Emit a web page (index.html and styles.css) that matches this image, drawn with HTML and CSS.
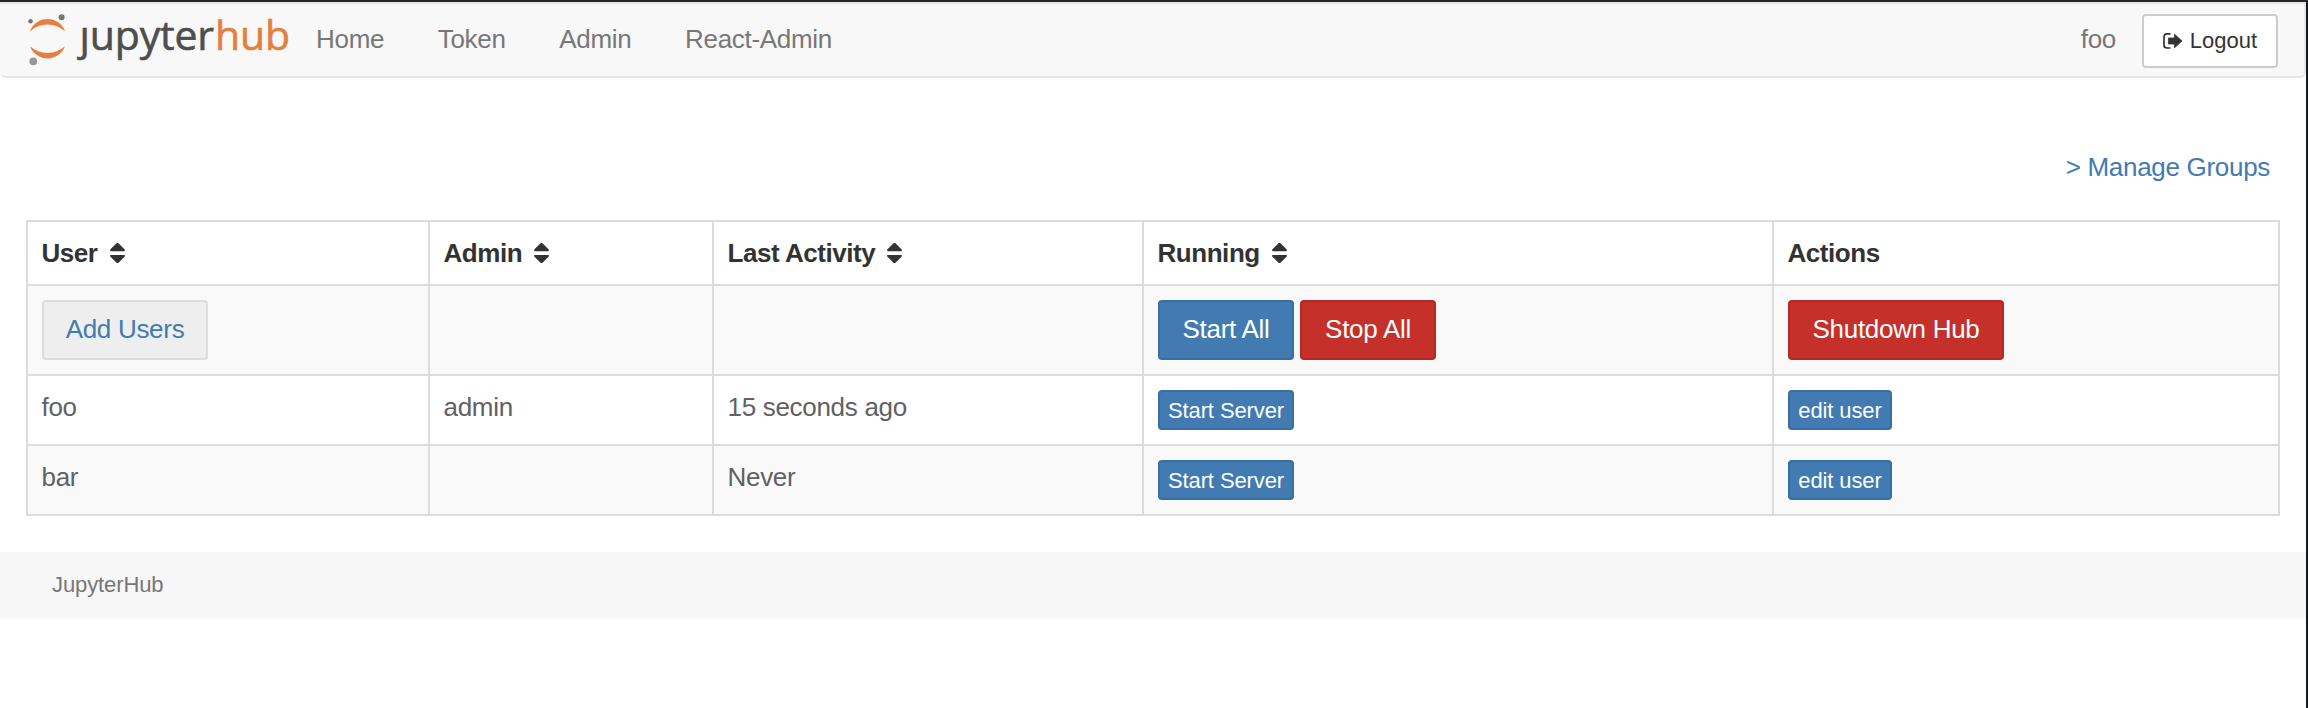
FILE: index.html
```html
<!DOCTYPE html>
<html lang="en">
<head>
<meta charset="utf-8">
<title>JupyterHub</title>
<link rel="stylesheet" href="styles.css">
</head>
<body>
<svg class="defs" width="0" height="0">
  <symbol id="sort" viewBox="0 0 1024 1280">
    <path d="M1024 832q0 26-19 45l-448 448q-19 19-45 19t-45-19L19 877Q0 858 0 832t19-45 45-19h896q26 0 45 19t19 45zM1024 448q0 26-19 45t-45 19H64q-26 0-45-19T0 448t19-45L467-45q19-19 45-19t45 19l448 448q19 19 19 45z"/>
  </symbol>
</svg>
<div class="page">
  <nav class="navbar">
    <a class="brand">
      <svg width="264" height="64" viewBox="0 0 264 64">
        <path class="orange" d="M2 21.200A18.600 18.600 0 0 1 37 21.200A26 26 0 0 0 2 21.200z"/>
        <path class="orange" d="M2 36.200A18.600 18.600 0 0 0 37 36.200A26 26 0 0 1 2 36.200z"/>
        <circle class="dot" cx="33.600" cy="7.300" r="3"/>
        <circle class="dot" cx="2.500" cy="11.300" r="2.300"/>
        <circle class="dot light" cx="5.300" cy="51.300" r="3.900"/>
        <text class="wordmark" x="51.500" y="39.500">jupyter<tspan class="hub" x="187">hub</tspan></text>
        <rect class="cover" x="48" y="2" width="14" height="14"/>
      </svg>
    </a>
    <a class="nav-link">Home</a>
    <a class="nav-link">Token</a>
    <a class="nav-link">Admin</a>
    <a class="nav-link">React-Admin</a>
    <span class="username">foo</span>
    <a class="logout">
      <svg width="20" height="16" viewBox="0 0 20 16"><path d="M7.500 .8H4A3 3 0 0 0 1 3.800V12a3 3 0 0 0 3 3h3.500" fill="none" stroke="#333" stroke-width="1.700"/><path d="M5.500 5h6V1.200L19 8l-7.500 6.800V11h-6z" fill="#333" stroke="#333" stroke-width=".8" stroke-linejoin="round"/></svg>
      <span>Logout</span>
    </a>
  </nav>
  <main class="content">
    <a class="manage">&gt; Manage Groups</a>
    <table class="users">
      <colgroup><col class="c1"><col class="c2"><col class="c3"><col class="c4"><col class="c5"></colgroup>
      <thead>
        <tr class="head">
          <th>User<svg class="sort"><use href="#sort"/></svg></th>
          <th>Admin<svg class="sort"><use href="#sort"/></svg></th>
          <th>Last Activity<svg class="sort"><use href="#sort"/></svg></th>
          <th>Running<svg class="sort"><use href="#sort"/></svg></th>
          <th>Actions</th>
        </tr>
      </thead>
      <tbody>
        <tr class="bulk striped">
          <td><div class="group"><a class="btn add">Add Users</a></div></td>
          <td></td>
          <td></td>
          <td><div class="group"><a class="btn primary all">Start All</a><a class="btn danger all">Stop All</a></div></td>
          <td><div class="group"><a class="btn danger shutdown">Shutdown Hub</a></div></td>
        </tr>
        <tr class="row">
          <td>foo</td><td>admin</td><td>15 seconds ago</td>
          <td><div class="group"><a class="btn small primary start">Start Server</a></div></td>
          <td><div class="group"><a class="btn small primary edit">edit user</a></div></td>
        </tr>
        <tr class="row striped">
          <td>bar</td><td></td><td>Never</td>
          <td><div class="group"><a class="btn small primary start">Start Server</a></div></td>
          <td><div class="group"><a class="btn small primary edit">edit user</a></div></td>
        </tr>
      </tbody>
    </table>
  </main>
  <footer class="footer">JupyterHub</footer>
</div>
</body>
</html>
```
FILE: styles.css
```css
* { box-sizing: border-box; }
body {
  margin: 0;
  background: #fff;
  font-family: "Liberation Sans", Arial, sans-serif;
  font-size: 26px;
  line-height: 36px;
  letter-spacing: -.3px;
  color: #616161;
}
.defs { display: block; }
.page {
  height: 708px;
  border-top: 2px solid #262626;
  border-right: 2px solid #16191c;
}
.navbar {
  display: flex;
  align-items: flex-start;
  height: 76px;
  padding: 0 28px 0 28px;
  background: #f8f8f8;
  border: 2px solid #e7e7e7;
  border-left: 0;
  border-radius: 0 0 6px 6px;
  color: #777;
}
.brand { width: 288px; height: 64px; padding-top: 6px; }
.brand svg { display: block; overflow: visible; }
.wordmark {
  font-family: "Open Sans", sans-serif;
  font-size: 41px;
  letter-spacing: -.15px;
  fill: #4e4e4e;
  stroke: #4e4e4e;
  stroke-width: .6px;
}
.orange { fill: #e57f40; }
.hub { fill: #e57f40; stroke: #e57f40; }
.dot { fill: #767677; }
.light { fill: #989798; }
.cover { fill: #f8f8f8; }
.nav-link { padding-top: 17px; margin-right: 53.600px; }
.username { margin-left: auto; padding-top: 17px; margin-right: 26px; }
.logout {
  display: flex;
  align-items: center;
  justify-content: center;
  gap: 7px;
  width: 136px;
  height: 54px;
  margin-top: 10px;
  margin-right: -2px;
  border: 2px solid #ccc;
  border-radius: 4px;
  background: #fff;
  font-size: 22px;
  letter-spacing: 0;
  color: #333;
}
.content { padding: 71px 26px 0; }
.manage { display: block; text-align: right; padding-right: 10px; color: #427ab2; }
.users {
  width: 2254px;
  margin-top: 35px;
  table-layout: fixed;
  border-collapse: collapse;
}
.c1 { width: 402px; }
.c2 { width: 284px; }
.c3 { width: 430px; }
.c4 { width: 630px; }
.c5 { width: 506px; }
.users th, .users td {
  border: 2px solid #dcdcdc;
  padding: 13px 14px 13px 13.500px;
  vertical-align: top;
  text-align: left;
}
.users th { color: #333; letter-spacing: -.45px; }
.head { height: 64px; }
.bulk { height: 90px; }
.row { height: 70px; }
.striped { background: #f9f9f9; }
.sort { width: 15px; height: 20px; margin-left: 12px; vertical-align: -1px; fill: #333; overflow: visible; }
.group { display: flex; gap: 6px; padding-top: 1px; margin-left: .5px; }
.btn {
  height: 60px;
  border: 2px solid;
  border-radius: 4px;
  text-align: center;
  line-height: 54px;
  white-space: nowrap;
}
.add { width: 166px; background: #eee; border-color: #dcdcdc; color: #427ab2; }
.primary { background: #427ab2; border-color: #3a6da1; color: #fff; }
.danger { background: #c5302a; border-color: #b02b27; color: #fff; }
.all { width: 136px; }
.shutdown { width: 216px; }
.small { height: 40px; font-size: 22px; line-height: 38px; letter-spacing: -.1px; }
.start { width: 136px; }
.edit { width: 104px; }
.footer {
  height: 66px;
  margin-top: 36px;
  padding: 15px 52px;
  background: #f7f7f7;
  font-size: 22px;
  letter-spacing: -.1px;
  color: #777;
}
```
